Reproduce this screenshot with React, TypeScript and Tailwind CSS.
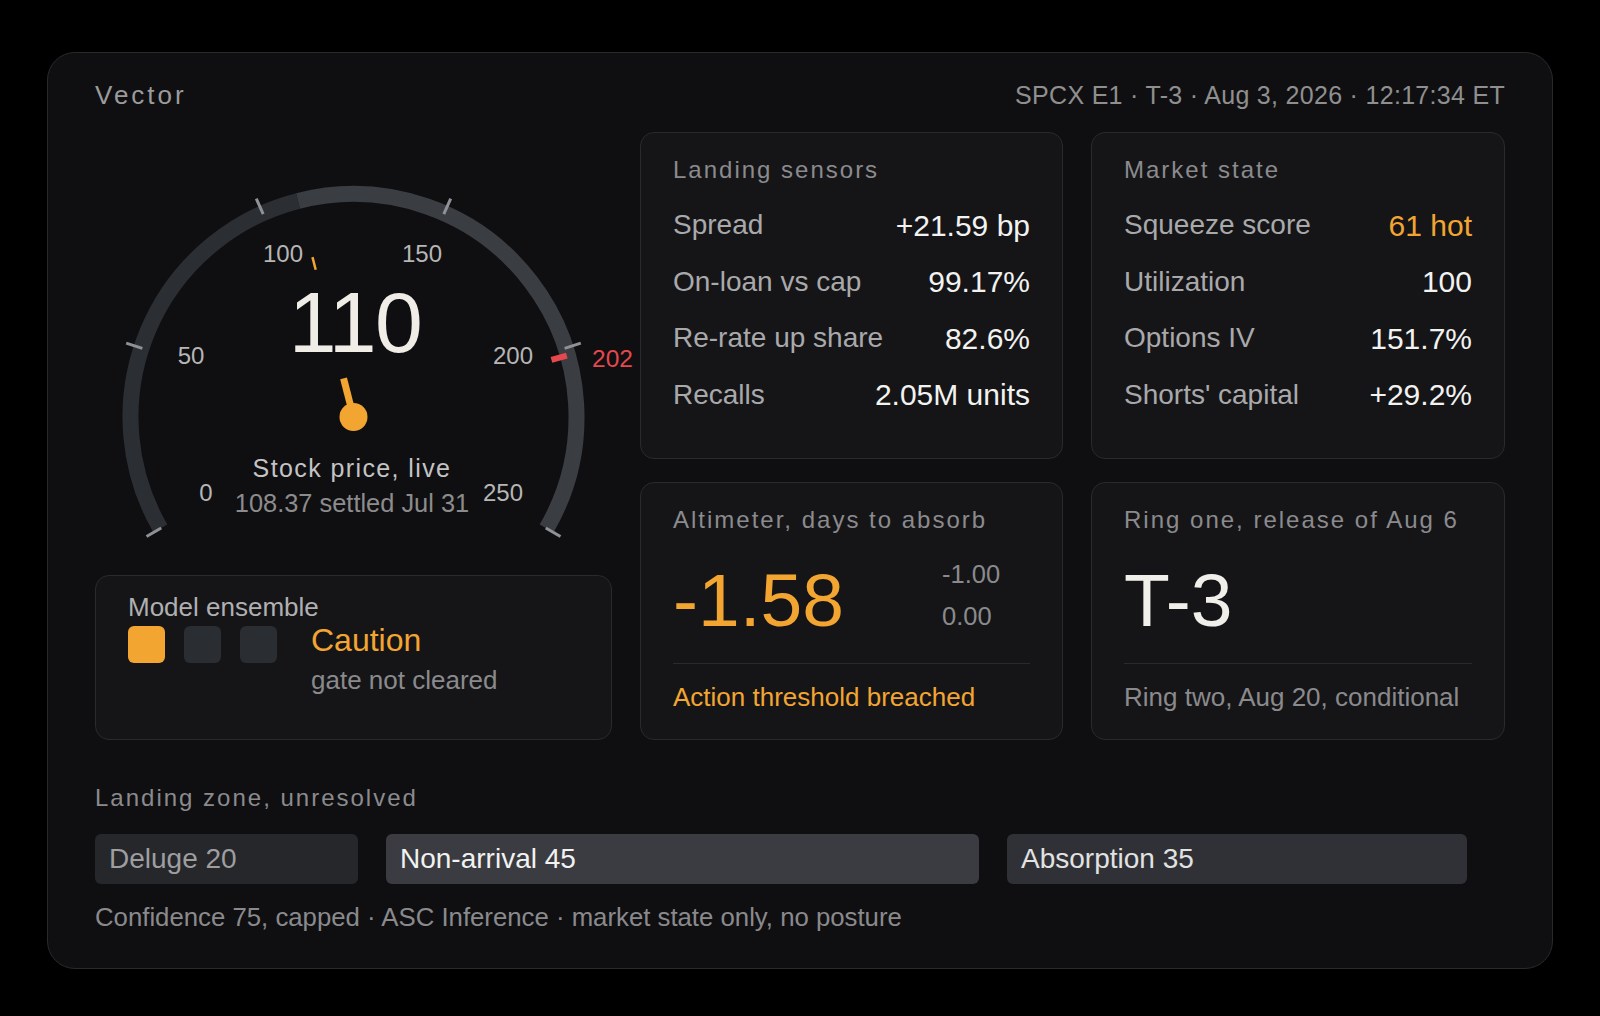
import React from "react";

const ORANGE = "#f3a532";
const CX = 258.5;
const CY = 285;

const toRad = (d: number) => (d * Math.PI) / 180;
const ang = (v: number) => -120 + (240 * v) / 250;
const pt = (deg: number, r: number) => [
  CX + r * Math.sin(toRad(deg)),
  CY - r * Math.cos(toRad(deg)),
];

function arcPath(from: number, to: number, r: number) {
  const [x1, y1] = pt(ang(from), r);
  const [x2, y2] = pt(ang(to), r);
  const large = ang(to) - ang(from) > 180 ? 1 : 0;
  return `M ${x1} ${y1} A ${r} ${r} 0 ${large} 1 ${x2} ${y2}`;
}

function Radial({ v, r1, r2, color, w }: { v: number; r1: number; r2: number; color: string; w: number }) {
  const [x1, y1] = pt(ang(v), r1);
  const [x2, y2] = pt(ang(v), r2);
  return <line x1={x1} y1={y1} x2={x2} y2={y2} stroke={color} strokeWidth={w} />;
}

const tickLabels = [
  { t: "0", x: 111, y: 360 },
  { t: "50", x: 96, y: 223 },
  { t: "100", x: 188, y: 121 },
  { t: "150", x: 327, y: 121 },
  { t: "200", x: 418, y: 223 },
  { t: "250", x: 408, y: 360 },
];

function Gauge() {
  return (
    <svg width={517} height={420} viewBox="0 0 517 420" className="overflow-visible">
      <path d={arcPath(0, 110, 223)} fill="none" stroke="#2b2e32" strokeWidth={16} />
      <path d={arcPath(110, 250, 223)} fill="none" stroke="#3a3d42" strokeWidth={16} />
      {[0, 50, 100, 150, 200, 250].map((v) => (
        <Radial key={v} v={v} r1={222} r2={239} color="#8e9196" w={3} />
      ))}
      <Radial v={202} r1={206} r2={222} color="#e5484d" w={6} />
      <Radial v={110} r1={152} r2={165} color={ORANGE} w={2.5} />
      {tickLabels.map((l) => (
        <text
          key={l.t}
          x={l.x}
          y={l.y}
          textAnchor="middle"
          dominantBaseline="central"
          fontSize={24}
          fill="#b6b6b6"
        >
          {l.t}
        </text>
      ))}
      <text x={497} y={226} dominantBaseline="central" fontSize={24.5} fill="#e5484d">
        202
      </text>
      <text
        x={260}
        y={190}
        textAnchor="middle"
        dominantBaseline="central"
        fontSize={86}
        letterSpacing={-1.5}
        fill="#efede6"
      >
        110
      </text>
      <Radial v={110} r1={0} r2={40} color={ORANGE} w={7} />
      <circle cx={CX} cy={CY} r={14} fill={ORANGE} />
      <text
        x={257}
        y={336}
        textAnchor="middle"
        dominantBaseline="central"
        fontSize={25}
        letterSpacing={1.4}
        fill="#c4c4c4"
      >
        Stock price, live
      </text>
      <text x={257} y={371} textAnchor="middle" dominantBaseline="central" fontSize={25.4} fill="#8c8c8c">
        108.37 settled Jul 31
      </text>
    </svg>
  );
}

type Row = { label: string; value: string; hot?: boolean };

function ListCard({ title, rows }: { title: string; rows: Row[] }) {
  return (
    <div className="rounded-[14px] border border-[#2a2a2e] bg-[#151518] px-[32px] pt-[21px]">
      <div className="text-[24px] leading-[32px] tracking-[2px] text-[#8b8b8e]">{title}</div>
      <div className="mt-[11px] flex flex-col">
        {rows.map((r) => (
          <div key={r.label} className="flex h-[56.5px] items-center justify-between">
            <span className="text-[28px] text-[#a9a9ab]">{r.label}</span>
            <span className={`text-[30px] ${r.hot ? "text-[#f3a532]" : "text-[#f2f2f0]"}`}>{r.value}</span>
          </div>
        ))}
      </div>
    </div>
  );
}

function BigCard({
  title,
  big,
  orange,
  side,
  foot,
  footOrange,
}: {
  title: string;
  big: string;
  orange?: boolean;
  side?: string[];
  foot: string;
  footOrange?: boolean;
}) {
  return (
    <div className="rounded-[14px] border border-[#2a2a2e] bg-[#151518] px-[32px] pt-[21px]">
      <div className="text-[24px] leading-[32px] tracking-[2px] text-[#8b8b8e]">{title}</div>
      <div className="mt-[27px] flex h-[75px] items-start">
        <div
          className={`w-[269px] text-[75px] leading-[75px] ${orange ? "text-[#f3a532]" : "text-[#f0efea]"}`}
        >
          {big}
        </div>
        {side && (
          <div className="mt-[-4px] flex flex-col gap-[12px] text-[25.5px] leading-[30px] text-[#8a8a8c]">
            {side.map((s) => (
              <span key={s}>{s}</span>
            ))}
          </div>
        )}
      </div>
      <div className="mt-[25px] h-px bg-[#2a2a2e]" />
      <div
        className={`mt-[16px] text-[26px] leading-[34px] ${footOrange ? "text-[#f3a532]" : "text-[#8a8a8c]"}`}
      >
        {foot}
      </div>
    </div>
  );
}

export default function App() {
  return (
    <div className="min-h-[1016px] bg-black px-[47px] pt-[52px] font-['Liberation_Sans',Arial,sans-serif]">
      <div className="rounded-[28px] border border-[#2a2a2d] bg-[#0f0f12] px-[47px] pt-[26px] pb-[33px]">
        <div className="flex items-center justify-between leading-[32px]">
          <span className="text-[26px] tracking-[3px] text-[#9b9b9b]">Vector</span>
          <span className="text-[25px] tracking-[0.3px] text-[#8f8f8f]">
            SPCX E1 · T-3 · Aug 3, 2026 · 12:17:34 ET
          </span>
        </div>

        <div className="mt-[21px] grid grid-cols-[517px_423px_414px] grid-rows-[327px_258px] gap-x-[28px] gap-y-[23px]">
          <div className="row-span-2 flex flex-col justify-between">
            <Gauge />
            <div className="h-[165px] rounded-[14px] border border-[#2a2a2e] bg-[#151518] px-[32px] pt-[15px]">
              <div className="text-[26px] leading-[32px] text-[#b0b0b2]">Model ensemble</div>
              <div className="mt-[-2px] flex items-start">
                <div className="mt-[5px] flex gap-[19px]">
                  <div className="h-[37px] w-[37px] rounded-[6px] bg-[#f3a532]" />
                  <div className="h-[37px] w-[37px] rounded-[6px] bg-[#2a2d31]" />
                  <div className="h-[37px] w-[37px] rounded-[6px] bg-[#2a2d31]" />
                </div>
                <div className="ml-[34px] flex flex-col">
                  <span className="text-[32px] leading-[38px] text-[#f3a532]">Caution</span>
                  <span className="mt-[3px] text-[26px] leading-[36px] text-[#8a8a8c]">gate not cleared</span>
                </div>
              </div>
            </div>
          </div>

          <ListCard
            title="Landing sensors"
            rows={[
              { label: "Spread", value: "+21.59 bp" },
              { label: "On-loan vs cap", value: "99.17%" },
              { label: "Re-rate up share", value: "82.6%" },
              { label: "Recalls", value: "2.05M units" },
            ]}
          />
          <ListCard
            title="Market state"
            rows={[
              { label: "Squeeze score", value: "61 hot", hot: true },
              { label: "Utilization", value: "100" },
              { label: "Options IV", value: "151.7%" },
              { label: "Shorts' capital", value: "+29.2%" },
            ]}
          />
          <BigCard
            title="Altimeter, days to absorb"
            big="-1.58"
            orange
            side={["-1.00", "0.00"]}
            foot="Action threshold breached"
            footOrange
          />
          <BigCard title="Ring one, release of Aug 6" big="T-3" foot="Ring two, Aug 20, conditional" />
        </div>

        <div className="mt-[42px] text-[24px] leading-[32px] tracking-[2px] text-[#8b8b8e]">
          Landing zone, unresolved
        </div>
        <div className="mt-[20px] flex gap-[28px]">
          <div className="flex h-[50px] w-[263px] items-center rounded-[6px] bg-[#25272b] px-[14px] text-[28px] text-[#9e9ea0]">
            Deluge 20
          </div>
          <div className="flex h-[50px] w-[593px] items-center rounded-[6px] bg-[#3a3c42] px-[14px] text-[28px] text-[#f2f2f0]">
            Non-arrival 45
          </div>
          <div className="flex h-[50px] w-[460px] items-center rounded-[6px] bg-[#2f3136] px-[14px] text-[28px] text-[#e2e2e2]">
            Absorption 35
          </div>
        </div>
        <div className="mt-[15px] text-[25.75px] leading-[36px] text-[#8a8a8c]">
          Confidence 75, capped · ASC Inference · market state only, no posture
        </div>
      </div>
    </div>
  );
}
